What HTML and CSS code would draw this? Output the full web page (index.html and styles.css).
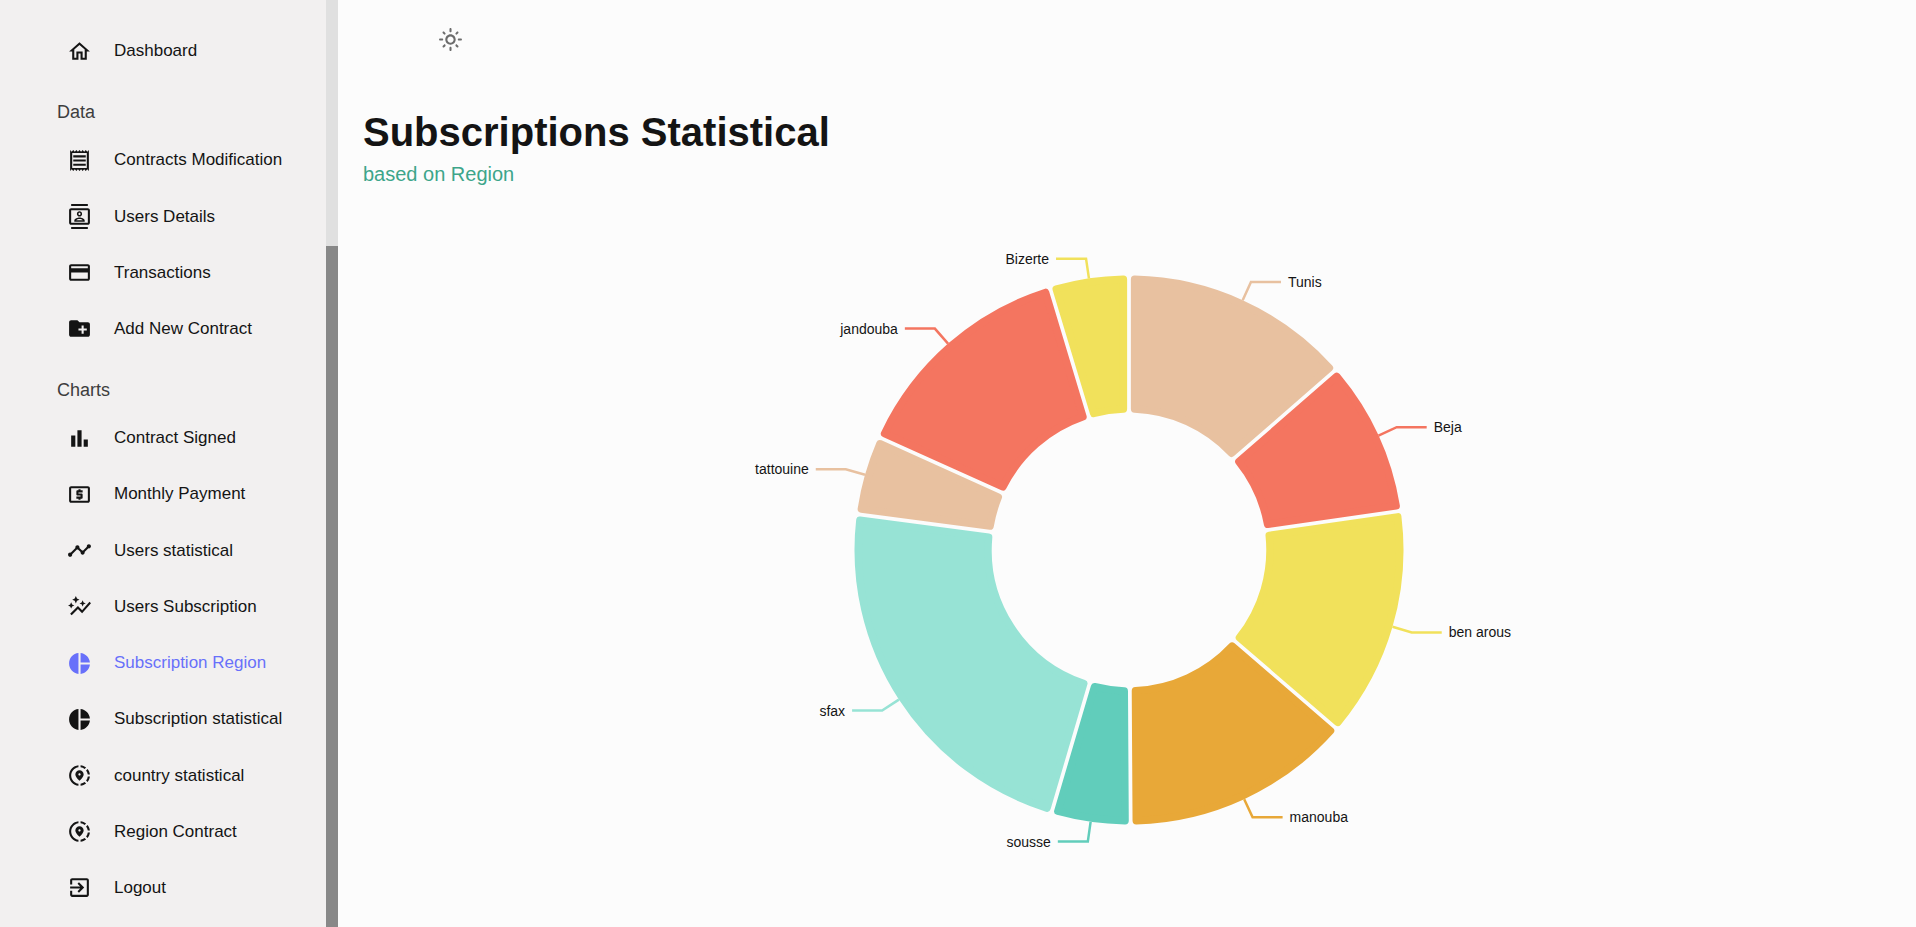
FILE: index.html
```html
<!DOCTYPE html>
<html lang="en">
<head>
<meta charset="utf-8">
<title>Subscriptions Statistical</title>
<link rel="stylesheet" href="styles.css">
</head>
<body>
<div class="app">
  <aside class="sidebar">
    <nav class="menu" aria-label="Main">
      <a class="menu-item" href="#"><svg class="icon" viewBox="0 0 24 24"><path d="m12 5.69 5 4.5V18h-2v-6H9v6H7v-7.81l5-4.5M12 3 2 12h3v8h6v-6h2v6h6v-8h3L12 3z"/></svg><span>Dashboard</span></a>
      <h2 class="menu-heading">Data</h2>
      <a class="menu-item" href="#"><svg class="icon" viewBox="0 0 24 24"><path d="M19.5 3.5 18 2l-1.5 1.5L15 2l-1.5 1.5L12 2l-1.5 1.5L9 2 7.5 3.5 6 2 4.5 3.5 3 2v20l1.5-1.5L6 22l1.5-1.5L9 22l1.5-1.5L12 22l1.5-1.5L15 22l1.5-1.5L18 22l1.5-1.5L21 22V2l-1.5 1.5zM19 19.09H5V4.91h14v14.18zM6 15h12v2H6zm0-4h12v2H6zm0-4h12v2H6z"/></svg><span>Contracts Modification</span></a>
      <a class="menu-item" href="#"><svg class="icon" viewBox="0 0 24 24"><path d="M20 4H4c-1.1 0-2 .9-2 2v12c0 1.1.9 2 2 2h16c1.1 0 2-.9 2-2V6c0-1.1-.9-2-2-2zm0 14H4V6h16v12zM4 0h16v2H4zm0 22h16v2H4zm8-10c1.38 0 2.5-1.12 2.5-2.5S13.38 7 12 7 9.5 8.12 9.5 9.5 10.62 12 12 12zm0-3.5c.55 0 1 .45 1 1s-.45 1-1 1-1-.45-1-1 .45-1 1-1zm5 7.49C17 13.9 13.69 13 12 13s-5 .9-5 2.99V17h10v-1.01zm-8.19-.49c.61-.52 2.03-1 3.19-1 1.17 0 2.59.48 3.2 1H8.81z"/></svg><span>Users Details</span></a>
      <a class="menu-item" href="#"><svg class="icon" viewBox="0 0 24 24"><path d="M20 4H4c-1.11 0-1.99.89-1.99 2L2 18c0 1.11.89 2 2 2h16c1.11 0 2-.89 2-2V6c0-1.11-.89-2-2-2zm0 14H4v-6h16v6zm0-10H4V6h16v2z"/></svg><span>Transactions</span></a>
      <a class="menu-item" href="#"><svg class="icon" viewBox="0 0 24 24"><path d="M20 6h-8l-2-2H4c-1.11 0-1.99.89-1.99 2L2 18c0 1.11.89 2 2 2h16c1.11 0 2-.89 2-2V8c0-1.11-.89-2-2-2zm-1 8h-3v3h-2v-3h-3v-2h3V9h2v3h3v2z"/></svg><span>Add New Contract</span></a>
      <h2 class="menu-heading">Charts</h2>
      <a class="menu-item" href="#"><svg class="icon" viewBox="0 0 24 24"><path d="M4 9h4v11H4zm12 4h4v7h-4zm-6-9h4v16h-4z"/></svg><span>Contract Signed</span></a>
      <a class="menu-item" href="#"><svg class="icon" viewBox="0 0 24 24"><path d="M11 17h2v-1h1c.55 0 1-.45 1-1v-3c0-.55-.45-1-1-1h-3v-1h4V8h-2V7h-2v1h-1c-.55 0-1 .45-1 1v3c0 .55.45 1 1 1h3v1H9v2h2v1zm9-13H4c-1.11 0-1.99.89-1.99 2L2 18c0 1.11.89 2 2 2h16c1.11 0 2-.89 2-2V6c0-1.11-.89-2-2-2zm0 14H4V6h16v12z"/></svg><span>Monthly Payment</span></a>
      <a class="menu-item" href="#"><svg class="icon" viewBox="0 0 24 24"><path d="M23 8c0 1.1-.9 2-2 2-.18 0-.35-.02-.51-.07l-3.56 3.55c.05.16.07.34.07.52 0 1.1-.9 2-2 2s-2-.9-2-2c0-.18.02-.36.07-.52l-2.55-2.55c-.16.05-.34.07-.52.07s-.36-.02-.52-.07l-4.55 4.56c.05.16.07.33.07.51 0 1.1-.9 2-2 2s-2-.9-2-2 .9-2 2-2c.18 0 .35.02.51.07l4.56-4.55C8.02 9.36 8 9.18 8 9c0-1.1.9-2 2-2s2 .9 2 2c0 .18-.02.36-.07.52l2.55 2.55c.16-.05.34-.07.52-.07s.36.02.52.07l3.55-3.56C19.02 8.35 19 8.18 19 8c0-1.1.9-2 2-2s2 .9 2 2z"/></svg><span>Users statistical</span></a>
      <a class="menu-item" href="#"><svg class="icon" viewBox="0 0 24 24"><path d="M14.06 9.94 12 9l2.06-.94L15 6l.94 2.06L18 9l-2.06.94L15 12l-.94-2.06zM4 14l.94-2.06L7 11l-2.06-.94L4 8l-.94 2.06L1 11l2.06.94L4 14zm4.5-5 1.09-2.41L12 5.5 9.59 4.41 8.5 2 7.41 4.41 5 5.5l2.41 1.09L8.5 9zm-4 11.5 6-6.01 4 4L23 8.93l-1.41-1.41-7.09 7.97-4-4L3 19l1.5 1.5z"/></svg><span>Users Subscription</span></a>
      <a class="menu-item active" href="#" aria-current="page"><svg class="icon" viewBox="0 0 24 24"><path d="M11 2v20c-5.07-.5-9-4.79-9-10s3.93-9.5 9-10zm2.03 0v8.99H22c-.47-4.74-4.24-8.52-8.97-8.99zm0 11.01V22c4.74-.47 8.5-4.25 8.97-8.99h-8.97z"/></svg><span>Subscription Region</span></a>
      <a class="menu-item" href="#"><svg class="icon" viewBox="0 0 24 24"><path d="M11 2v20c-5.07-.5-9-4.79-9-10s3.93-9.5 9-10zm2.03 0v8.99H22c-.47-4.74-4.24-8.52-8.97-8.99zm0 11.01V22c4.74-.47 8.5-4.25 8.97-8.99h-8.97z"/></svg><span>Subscription statistical</span></a>
      <a class="menu-item" href="#"><svg class="icon" viewBox="0 0 24 24"><path d="M13.02 19.93v2.02c2.01-.2 3.84-1 5.32-2.21l-1.42-1.43c-1.11.86-2.44 1.44-3.9 1.62zM4.03 12c0-4.05 3.03-7.41 6.95-7.93V2.05C5.95 2.58 2.03 6.84 2.03 12c0 5.16 3.92 9.42 8.95 9.95v-2.02c-3.92-.52-6.95-3.88-6.95-7.93zm15.92-1h2.02c-.2-2.01-1-3.84-2.21-5.32l-1.43 1.43c.86 1.1 1.44 2.43 1.62 3.89zm-1.61-6.74c-1.48-1.21-3.32-2.01-5.32-2.21v2.02c1.46.18 2.79.76 3.9 1.62l1.42-1.43zm-.01 12.64 1.43 1.42c1.21-1.48 2.01-3.31 2.21-5.32h-2.02c-.18 1.46-.76 2.79-1.62 3.9z"/><path d="M16 11.1C16 8.61 14.1 7 12 7s-4 1.61-4 4.1c0 1.66 1.33 3.63 4 5.9 2.67-2.27 4-4.24 4-5.9zm-4 .9c-.59 0-1.07-.48-1.07-1.07 0-.59.48-1.07 1.07-1.07s1.07.48 1.07 1.07c0 .59-.48 1.07-1.07 1.07z"/></svg><span>country statistical</span></a>
      <a class="menu-item" href="#"><svg class="icon" viewBox="0 0 24 24"><path d="M13.02 19.93v2.02c2.01-.2 3.84-1 5.32-2.21l-1.42-1.43c-1.11.86-2.44 1.44-3.9 1.62zM4.03 12c0-4.05 3.03-7.41 6.95-7.93V2.05C5.95 2.58 2.03 6.84 2.03 12c0 5.16 3.92 9.42 8.95 9.95v-2.02c-3.92-.52-6.95-3.88-6.95-7.93zm15.92-1h2.02c-.2-2.01-1-3.84-2.21-5.32l-1.43 1.43c.86 1.1 1.44 2.43 1.62 3.89zm-1.61-6.74c-1.48-1.21-3.32-2.01-5.32-2.21v2.02c1.46.18 2.79.76 3.9 1.62l1.42-1.43zm-.01 12.64 1.43 1.42c1.21-1.48 2.01-3.31 2.21-5.32h-2.02c-.18 1.46-.76 2.79-1.62 3.9z"/><path d="M16 11.1C16 8.61 14.1 7 12 7s-4 1.61-4 4.1c0 1.66 1.33 3.63 4 5.9 2.67-2.27 4-4.24 4-5.9zm-4 .9c-.59 0-1.07-.48-1.07-1.07 0-.59.48-1.07 1.07-1.07s1.07.48 1.07 1.07c0 .59-.48 1.07-1.07 1.07z"/></svg><span>Region Contract</span></a>
      <a class="menu-item" href="#"><svg class="icon" viewBox="0 0 24 24"><path d="M10.09 15.59 11.5 17l5-5-5-5-1.41 1.41L12.67 11H3v2h9.67l-2.58 2.59zM19 3H5c-1.11 0-2 .9-2 2v4h2V5h14v14H5v-4H3v4c0 1.1.89 2 2 2h14c1.1 0 2-.9 2-2V5c0-1.1-.9-2-2-2z"/></svg><span>Logout</span></a>
    </nav>
    <div class="scroll-track"><div class="scroll-thumb"></div></div>
  </aside>
  <main class="content">
    <div class="topbar">
      <button class="icon-button" type="button" aria-label="Toggle light mode"><svg class="icon" viewBox="0 0 24 24"><path d="M12 9c1.65 0 3 1.35 3 3s-1.35 3-3 3-3-1.35-3-3 1.35-3 3-3m0-2c-2.76 0-5 2.24-5 5s2.24 5 5 5 5-2.24 5-5-2.24-5-5-5zM2 13h2c.55 0 1-.45 1-1s-.45-1-1-1H2c-.55 0-1 .45-1 1s.45 1 1 1zm18 0h2c.55 0 1-.45 1-1s-.45-1-1-1h-2c-.55 0-1 .45-1 1s.45 1 1 1zM11 2v2c0 .55.45 1 1 1s1-.45 1-1V2c0-.55-.45-1-1-1s-1 .45-1 1zm0 18v2c0 .55.45 1 1 1s1-.45 1-1v-2c0-.55-.45-1-1-1s-1 .45-1 1zM5.99 4.58c-.39-.39-1.03-.39-1.41 0-.39.39-.39 1.03 0 1.41l1.06 1.06c.39.39 1.03.39 1.41 0s.39-1.03 0-1.41L5.99 4.58zm12.37 12.37c-.39-.39-1.03-.39-1.41 0-.39.39-.39 1.03 0 1.41l1.06 1.06c.39.39 1.03.39 1.41 0 .39-.39.39-1.03 0-1.41l-1.06-1.06zm1.06-10.96c.39-.39.39-1.03 0-1.41-.39-.39-1.03-.39-1.41 0l-1.06 1.06c-.39.39-.39 1.03 0 1.41s1.03.39 1.41 0l1.06-1.06zM7.05 18.36c.39-.39.39-1.03 0-1.41-.39-.39-1.03-.39-1.41 0l-1.06 1.06c-.39.39-.39 1.03 0 1.41s1.03.39 1.41 0l1.06-1.06z"/></svg></button>
    </div>
    <header class="page-header">
      <h1 class="title">Subscriptions Statistical</h1>
      <p class="subtitle">based on Region</p>
    </header>
    <svg class="chart" id="region-chart" viewBox="-450 -350 900 700" role="img" aria-label="Subscriptions by region"></svg>
  </main>
</div>
<script src="chart.js"></script>
</body>
</html>
```
FILE: styles.css
```css
* {
  box-sizing: border-box;
}

body {
  margin: 0;
  background: #fcfcfc;
  color: #141414;
  font-family: "Liberation Sans", Arial, sans-serif;
}

.app {
  display: flex;
  min-height: 100vh;
}

.sidebar {
  display: flex;
  flex: none;
  background: #f2f0f0;
}

.menu {
  display: flex;
  flex-direction: column;
  width: 326px;
  padding: 23px 0 11px;
}

.menu-item {
  display: flex;
  flex: 1;
  align-items: center;
  gap: 22px;
  padding-left: 67px;
  color: #141414;
  font-size: 17px;
  line-height: 24px;
  text-decoration: none;
}

.menu-item.active {
  color: #6870fa;
}

.menu-heading {
  margin: 0;
  padding: 19px 0 6px 57px;
  color: #3d3d3d;
  font-size: 18px;
  font-weight: 400;
  line-height: 28px;
}

.icon {
  display: block;
  flex: none;
  width: 25px;
  height: 25px;
  fill: currentColor;
}

.scroll-track {
  display: flex;
  flex-direction: column;
  justify-content: flex-end;
  width: 12px;
  background: #e0e0e0;
}

.scroll-thumb {
  height: calc(100% - 246px);
  background: #888;
}

.content {
  flex: 1;
  min-width: 0;
  padding: 19px 21px 26px 25px;
}

.topbar {
  display: flex;
  padding-left: 67px;
}

.icon-button {
  padding: 8px;
  border: 0;
  background: none;
  color: #6c6c6c;
}

.page-header {
  padding: 48px 0 8px;
}

.title {
  margin: 0;
  font-size: 40px;
  line-height: 48px;
}

.subtitle {
  margin: 0;
  color: #3da58a;
  font-size: 20px;
  line-height: 36px;
}

.chart {
  display: block;
  width: 100%;
  height: 700px;
}

.chart-label {
  fill: #141414;
  font-size: 14px;
}
```
FILE: chart.js
```js
const regions = [
  { name: "Tunis", value: 3, color: "#e8c1a0" },
  { name: "Beja", value: 2, color: "#f47560" },
  { name: "ben arous", value: 3, color: "#f1e15b" },
  { name: "manouba", value: 3, color: "#e8a838" },
  { name: "sousse", value: 1, color: "#61cdbb" },
  { name: "sfax", value: 5, color: "#97e3d5" },
  { name: "tattouine", value: 1, color: "#e8c1a0" },
  { name: "jandouba", value: 3, color: "#f47560" },
  { name: "Bizerte", value: 1, color: "#f1e15b" }
];

const OUTER = 274.5;
const INNER = OUTER / 2;
const CORNER = 3.75;
const PAD = 0.7 * Math.PI / 180;
const HALF_GAP = Math.hypot(OUTER, INNER) * PAD / 2;
const DIAGONAL = 20;
const STRAIGHT = 30;
const TEXT_GAP = 7;

const svg = document.getElementById("region-chart");

function add(tag, attributes) {
  const node = document.createElementNS("http://www.w3.org/2000/svg", tag);
  for (const key in attributes) node.setAttribute(key, attributes[key]);
  svg.appendChild(node);
  return node;
}

function point(radius, angle) {
  return [radius * Math.sin(angle), -radius * Math.cos(angle)];
}

// The outline is inset by the corner radius; a round-joined stroke restores its size.
function slicePath(start, end) {
  const outer = OUTER - CORNER;
  const inner = INNER + CORNER;
  const outerInset = Math.asin((HALF_GAP + CORNER) / outer);
  const innerInset = Math.asin((HALF_GAP + CORNER) / inner);
  return `M${point(outer, start + outerInset)}
    A${outer},${outer} 0 0 1 ${point(outer, end - outerInset)}
    L${point(inner, end - innerInset)}
    A${inner},${inner} 0 0 0 ${point(inner, start + innerInset)}Z`;
}

const total = regions.reduce((sum, region) => sum + region.value, 0);
const unit = (2 * Math.PI - regions.length * PAD) / total;
let start = 0;

for (const region of regions) {
  const end = start + region.value * unit + PAD;
  const middle = (start + end) / 2;
  const side = middle < Math.PI ? 1 : -1;
  const anchor = point(OUTER, middle);
  const elbow = point(OUTER + DIAGONAL, middle);
  const tip = elbow[0] + side * STRAIGHT;

  add("path", {
    d: slicePath(start, end),
    fill: region.color,
    stroke: region.color,
    "stroke-width": CORNER * 2,
    "stroke-linejoin": "round"
  });
  add("path", {
    d: `M${anchor}L${elbow}H${tip}`,
    fill: "none",
    stroke: region.color,
    "stroke-width": 2.5
  });
  add("text", {
    class: "chart-label",
    x: tip + side * TEXT_GAP,
    y: elbow[1],
    "text-anchor": side > 0 ? "start" : "end",
    "dominant-baseline": "central"
  }).textContent = region.name;

  start = end;
}
```
